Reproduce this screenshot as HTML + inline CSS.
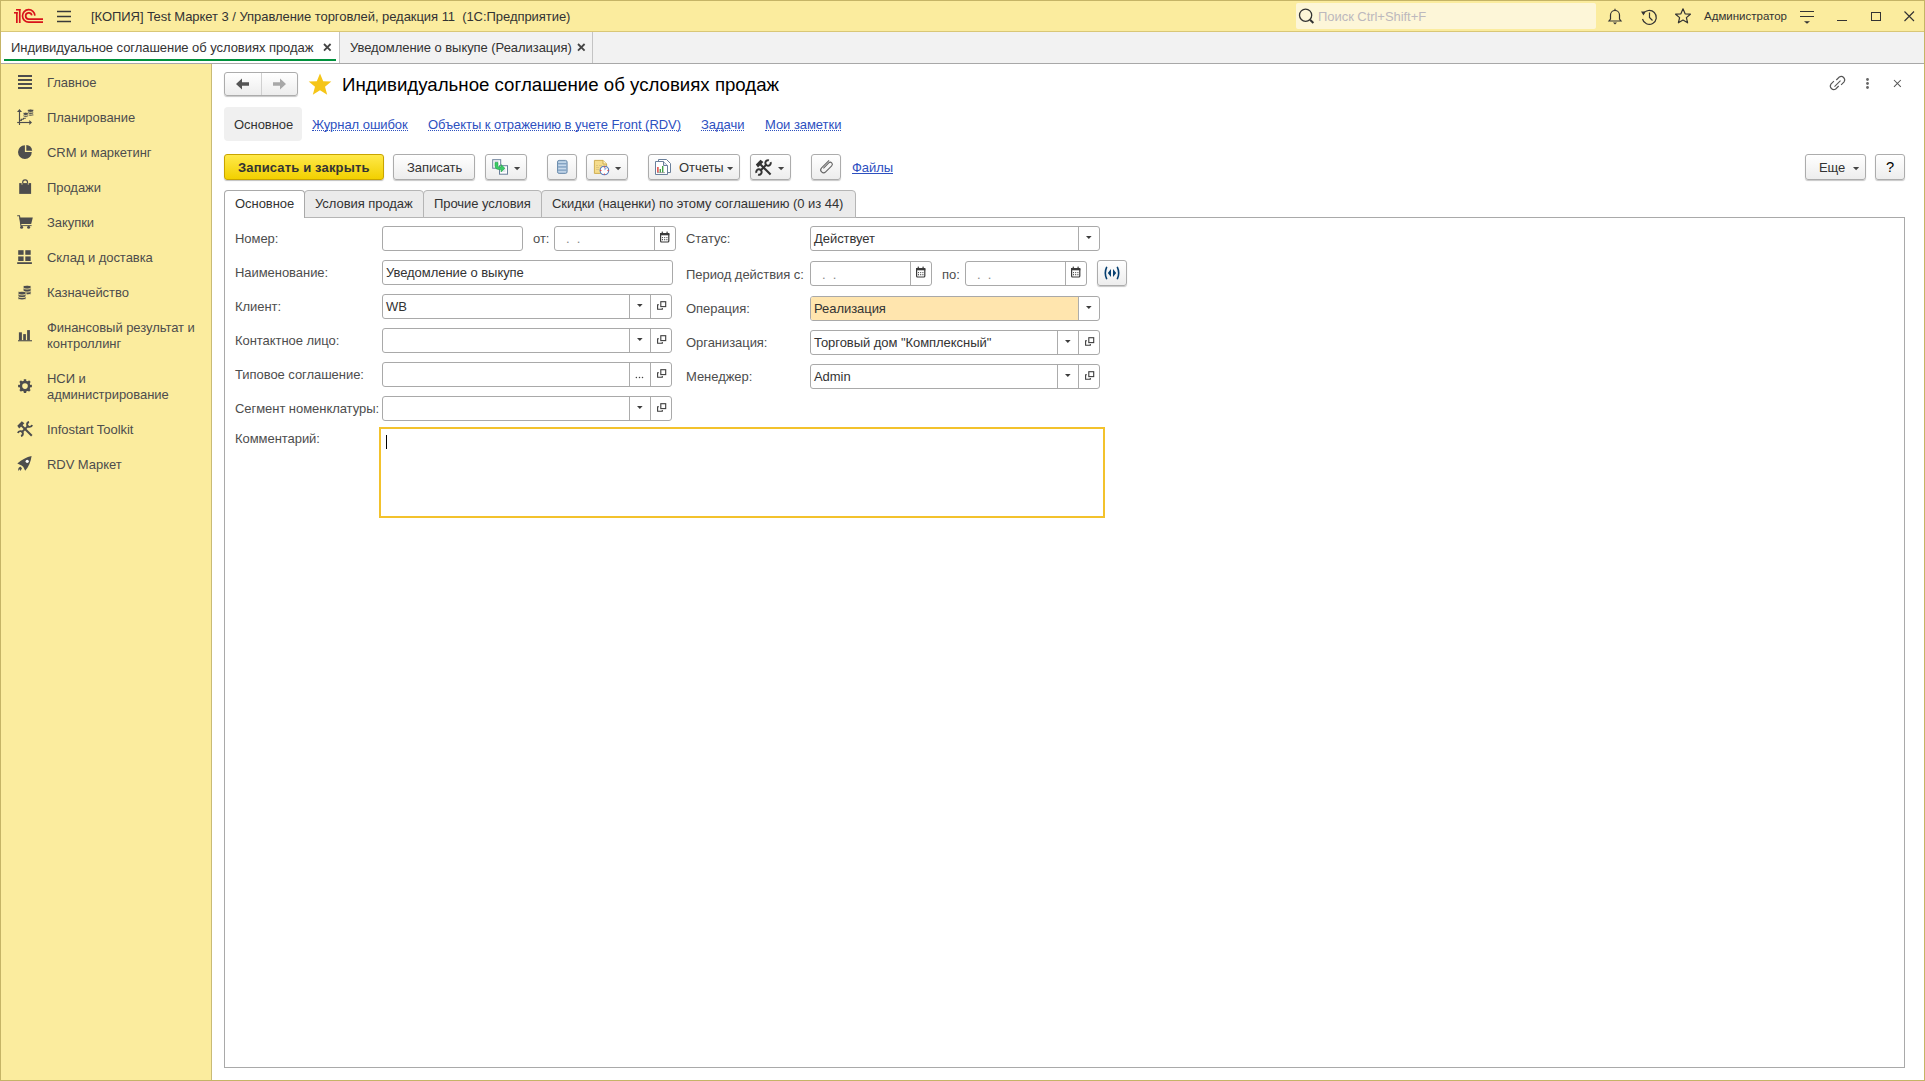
<!DOCTYPE html>
<html><head><meta charset="utf-8">
<style>
*{margin:0;padding:0;box-sizing:border-box}
html,body{width:1925px;height:1081px;overflow:hidden;background:#fff;font-family:"Liberation Sans", sans-serif;font-size:13.33px;color:#333}
.a{position:absolute}
svg.a{overflow:visible}
.t{position:absolute;white-space:nowrap;line-height:normal}
.btn{position:absolute;border:1px solid #acacac;border-radius:3px;background:linear-gradient(#ffffff,#ededed);box-shadow:0 1px 1px rgba(0,0,0,.22)}
.inp{position:absolute;border:1px solid #a9a9a9;border-radius:3px;background:#fff}
</style></head><body>
<div class="a" style="left:212px;top:64px;width:1712px;height:1016px;background:#fff"></div>
<div class="a" style="left:0px;top:0px;width:1925px;height:32px;background:#fbec9e;"></div>
<div class="a" style="left:0px;top:31px;width:1925px;height:1px;background:#d9c777;"></div>
<div class="a" style="left:0px;top:32px;width:1925px;height:32px;background:#f2f2f2;"></div>
<div class="a" style="left:0px;top:63px;width:1925px;height:1px;background:#a8a8a8;"></div>
<div class="a" style="left:1px;top:32px;width:338px;height:31px;background:#fff;"></div>
<div class="a" style="left:339px;top:32px;width:1px;height:31px;background:#c4c4c4;"></div>
<div class="a" style="left:592px;top:32px;width:1px;height:31px;background:#c4c4c4;"></div>
<div class="a" style="left:4px;top:59px;width:332px;height:2px;background:#00913c;"></div>
<div class="a" style="left:0px;top:64px;width:212px;height:1017px;background:#fbec9e;"></div>
<div class="a" style="left:211px;top:64px;width:1px;height:1017px;background:#c9bb76;"></div>
<div class="a" style="left:0px;top:0px;width:1925px;height:1px;background:#c5b466;"></div>
<div class="a" style="left:0px;top:0px;width:1px;height:1081px;background:#c5b466;"></div>
<div class="a" style="left:1924px;top:0px;width:1px;height:1081px;background:#c5b466;"></div>
<div class="a" style="left:0px;top:1080px;width:1925px;height:1px;background:#c5b466;"></div>
<svg class="a" style="left:10px;top:5px" width="40" height="23" viewBox="0 0 40 23"><g fill="#d8131b"><rect x="4" y="7" width="3.7" height="1.6"/><rect x="6" y="7" width="1.7" height="11"/>
<rect x="6" y="4" width="4.6" height="1.6"/><rect x="8.9" y="4" width="1.7" height="14"/></g>
<g fill="none" stroke="#d8131b" stroke-width="1.7"><path d="M24.9 10.6 A6.2 6.2 0 1 0 18.7 17.1 H33"/><path d="M21.8 10.4 A3.1 3.1 0 1 0 18.7 14.1 H33"/></g></svg>
<svg class="a" style="left:56px;top:9px" width="16" height="14" viewBox="0 0 16 14"><g stroke="#3a3a3a" stroke-width="1.3"><path d="M1 2.5H15M1 7.5H15M1 12.5H15"/></g></svg>
<div class="t " style="left:91px;top:9px;font-size:13px;color:#333;font-weight:normal;letter-spacing:-0.05px;">[КОПИЯ] Test Маркет 3 / Управление торговлей, редакция 11&nbsp; (1С:Предприятие)</div>
<div class="a" style="left:1296px;top:3px;width:300px;height:26px;background:#fdf6d8;border-radius:2px;"></div>
<svg class="a" style="left:1296px;top:6px" width="20" height="20" viewBox="0 0 20 20"><g fill="none" stroke="#333"><circle cx="9.6" cy="9.2" r="6.1" stroke-width="1.3"/><path d="M14 13.7L17.4 17" stroke-width="2"/></g></svg>
<div class="t " style="left:1318px;top:9px;font-size:13px;color:#bcb8bd;font-weight:normal;letter-spacing:-0.05px;">Поиск Ctrl+Shift+F</div>
<svg class="a" style="left:1606px;top:7px" width="18" height="18" viewBox="0 0 18 18"><g fill="none" stroke="#333" stroke-width="1.2"><path d="M3 14 H15 L13.5 12 V8 A4.5 4.5 0 0 0 4.5 8 V12 Z"/><path d="M9 1.8 V3.5"/></g><path d="M7 15.5 H11 L9 17.5Z" fill="#333"/></svg>
<svg class="a" style="left:1640px;top:8px" width="18" height="18" viewBox="0 0 18 18"><g fill="none" stroke="#333" stroke-width="1.2"><path d="M3.2 6 A7 7 0 1 1 2.5 11"/><path d="M9.5 4.5 V9.5 L12.5 12.5"/></g><path d="M1 3.5 L5.5 3.5 L3.5 7.5Z" fill="#333"/></svg>
<svg class="a" style="left:1674px;top:7px" width="18" height="18" viewBox="0 0 18 18"><path d="M9 1.8 L11.1 6.8 L16.4 7.2 L12.4 10.6 L13.6 15.8 L9 13 L4.4 15.8 L5.6 10.6 L1.6 7.2 L6.9 6.8Z" fill="none" stroke="#333" stroke-width="1.2" stroke-linejoin="round"/></svg>
<div class="t " style="left:1704px;top:10px;font-size:11.5px;color:#333;font-weight:normal;letter-spacing:0;">Администратор</div>
<svg class="a" style="left:1799px;top:9px" width="17" height="16" viewBox="0 0 17 16"><g stroke="#333" stroke-width="1.2"><path d="M1 2.5H15M1 7.5H15"/></g><path d="M5 12.2H11L8 14.8Z" fill="#333"/></svg>
<div class="a" style="left:1837px;top:20px;width:10px;height:1.3px;background:#333;"></div>
<div class="a" style="left:1871px;top:12px;width:10px;height:9px;border:1.2px solid #333;"></div>
<svg class="a" style="left:1904px;top:11px" width="11" height="11" viewBox="0 0 11 11"><g stroke="#333" stroke-width="1.15"><path d="M0.5 0.5L10 10M10 0.5L0.5 10"/></g></svg>
<div class="t " style="left:11px;top:40px;font-size:13px;color:#333;font-weight:normal;letter-spacing:-0.05px;">Индивидуальное соглашение об условиях продаж</div>
<svg class="a" style="left:323px;top:43px" width="9" height="9" viewBox="0 0 9 9"><g stroke="#444" stroke-width="1.8"><path d="M1 1L7.6 7.6M7.6 1L1 7.6"/></g></svg>
<div class="t " style="left:350px;top:40px;font-size:13px;color:#333;font-weight:normal;letter-spacing:-0.05px;">Уведомление о выкупе (Реализация)</div>
<svg class="a" style="left:577px;top:43px" width="9" height="9" viewBox="0 0 9 9"><g stroke="#444" stroke-width="1.8"><path d="M1 1L7.6 7.6M7.6 1L1 7.6"/></g></svg>
<div class="t " style="left:47px;top:75px;font-size:13px;color:#4d4d4d;font-weight:normal;letter-spacing:-0.05px;">Главное</div>
<div class="t " style="left:47px;top:110px;font-size:13px;color:#4d4d4d;font-weight:normal;letter-spacing:-0.05px;">Планирование</div>
<div class="t " style="left:47px;top:145px;font-size:13px;color:#4d4d4d;font-weight:normal;letter-spacing:-0.05px;">CRM и маркетинг</div>
<div class="t " style="left:47px;top:180px;font-size:13px;color:#4d4d4d;font-weight:normal;letter-spacing:-0.05px;">Продажи</div>
<div class="t " style="left:47px;top:215px;font-size:13px;color:#4d4d4d;font-weight:normal;letter-spacing:-0.05px;">Закупки</div>
<div class="t " style="left:47px;top:250px;font-size:13px;color:#4d4d4d;font-weight:normal;letter-spacing:-0.05px;">Склад и доставка</div>
<div class="t " style="left:47px;top:285px;font-size:13px;color:#4d4d4d;font-weight:normal;letter-spacing:-0.05px;">Казначейство</div>
<div class="t " style="left:47px;top:320px;font-size:13px;color:#4d4d4d;font-weight:normal;letter-spacing:-0.05px;">Финансовый результат и</div>
<div class="t " style="left:47px;top:336px;font-size:13px;color:#4d4d4d;font-weight:normal;letter-spacing:-0.05px;">контроллинг</div>
<div class="t " style="left:47px;top:371px;font-size:13px;color:#4d4d4d;font-weight:normal;letter-spacing:-0.05px;">НСИ и</div>
<div class="t " style="left:47px;top:387px;font-size:13px;color:#4d4d4d;font-weight:normal;letter-spacing:-0.05px;">администрирование</div>
<div class="t " style="left:47px;top:422px;font-size:13px;color:#4d4d4d;font-weight:normal;letter-spacing:-0.05px;">Infostart Toolkit</div>
<div class="t " style="left:47px;top:457px;font-size:13px;color:#4d4d4d;font-weight:normal;letter-spacing:-0.05px;">RDV Маркет</div>
<svg class="a" style="left:16px;top:73px" width="18" height="18" viewBox="0 0 18 18"><g fill="#4d4d4d"><rect x="2" y="2" width="14" height="2"/><rect x="2" y="6" width="14" height="2"/><rect x="2" y="10" width="14" height="2"/><rect x="2" y="14" width="14" height="2"/></g></svg>
<svg class="a" style="left:16px;top:108px" width="18" height="18" viewBox="0 0 18 18"><g fill="none" stroke="#4d4d4d" stroke-width="1.15"><path d="M3.5 3V17"/><path d="M1.2 14.5H14"/><path d="M4.1 12.3H5.3V11.2H7.2L7.6 10.2H9.8"/></g><g fill="#4d4d4d"><path d="M1 3.9L3.5 1L6 3.9Z"/><path d="M13.3 12L16 14.5L13.3 17Z"/></g><path d="M11.6 2.3A3.0 1.2 0 0 1 17.6 2.3V6.90A3.0 1.2 0 0 1 11.6 6.90Z" fill="#4d4d4d" stroke="#fbec9e" stroke-width="0.8"/><path d="M11.6 3.20A3.0 1.2 0 0 0 17.6 3.20" fill="none" stroke="#fbec9e" stroke-width="0.85"/><path d="M11.6 5.20A3.0 1.2 0 0 0 17.6 5.20" fill="none" stroke="#fbec9e" stroke-width="0.85"/><path d="M7.1 5.4A2.6 1.2 0 0 1 12.299999999999999 5.4V8.10A2.6 1.2 0 0 1 7.1 8.10Z" fill="#4d4d4d" stroke="#fbec9e" stroke-width="0.8"/><path d="M7.1 6.30A2.6 1.2 0 0 0 12.299999999999999 6.30" fill="none" stroke="#fbec9e" stroke-width="0.85"/></svg>
<svg class="a" style="left:16px;top:143px" width="18" height="18" viewBox="0 0 18 18"><g fill="#4d4d4d"><path d="M8.9 9.1V2.2A6.9 6.9 0 1 0 15.8 9.1Z"/><path d="M10.3 7.7V1.9A5.8 5.8 0 0 1 16.1 7.7Z"/></g></svg>
<svg class="a" style="left:16px;top:178px" width="18" height="18" viewBox="0 0 18 18"><path d="M6.7 6.5V4.2A2.4 2.4 0 0 1 11.5 4.2V6.5" fill="none" stroke="#4d4d4d" stroke-width="1.2"/><rect x="3.2" y="5.1" width="11.9" height="10.8" fill="#4d4d4d"/><g fill="#fbec9e"><rect x="5.6" y="5.1" width="0.8" height="1.6"/><rect x="11.8" y="5.1" width="0.8" height="1.6"/></g></svg>
<svg class="a" style="left:16px;top:213px" width="18" height="18" viewBox="0 0 18 18"><g fill="#4d4d4d"><path d="M3.4 4.4H16.8L15.2 11H4.6Z"/><rect x="4.4" y="12.2" width="11.2" height="0.9"/><circle cx="5.6" cy="14.3" r="1.5"/><circle cx="12.6" cy="14.3" r="1.5"/></g><path d="M1.2 2.7H3.5L4.9 12.5" fill="none" stroke="#4d4d4d" stroke-width="1.1"/></svg>
<svg class="a" style="left:16px;top:248px" width="18" height="18" viewBox="0 0 18 18"><g fill="#4d4d4d"><rect x="2.2" y="2.2" width="5.4" height="4.6"/><rect x="9.3" y="2.2" width="5.4" height="4.6"/><rect x="2.2" y="8.4" width="5.4" height="4.6"/><rect x="9.3" y="8.4" width="5.4" height="4.6"/><rect x="1.2" y="14.2" width="14.7" height="1.8"/></g></svg>
<svg class="a" style="left:16px;top:283px" width="18" height="18" viewBox="0 0 18 18"><path d="M7.1499999999999995 3.7A3.95 1.5 0 0 1 15.05 3.7V10.30A3.95 1.5 0 0 1 7.1499999999999995 10.30Z" fill="#4d4d4d" stroke="#fbec9e" stroke-width="0.8"/><path d="M7.1499999999999995 4.60A3.95 1.5 0 0 0 15.05 4.60" fill="none" stroke="#fbec9e" stroke-width="0.85"/><path d="M7.1499999999999995 7.60A3.95 1.5 0 0 0 15.05 7.60" fill="none" stroke="#fbec9e" stroke-width="0.85"/><path d="M2.05 9.700000000000001A3.95 1.4 0 0 1 9.95 9.700000000000001V15.50A3.95 1.4 0 0 1 2.05 15.50Z" fill="#4d4d4d" stroke="#fbec9e" stroke-width="0.8"/><path d="M2.05 10.60A3.95 1.4 0 0 0 9.95 10.60" fill="none" stroke="#fbec9e" stroke-width="0.85"/><path d="M2.05 13.20A3.95 1.4 0 0 0 9.95 13.20" fill="none" stroke="#fbec9e" stroke-width="0.85"/></svg>
<svg class="a" style="left:16px;top:326px" width="18" height="18" viewBox="0 0 18 18"><g fill="#4d4d4d"><rect x="2.9" y="6.3" width="3" height="8"/><rect x="7.2" y="8.1" width="2.7" height="6.2"/><rect x="11.1" y="4.1" width="2.8" height="10.2"/><rect x="2" y="14.2" width="14" height="1.1"/></g></svg>
<svg class="a" style="left:16px;top:377px" width="18" height="18" viewBox="0 0 18 18"><polygon points="14.27,7.92 15.89,7.87 15.89,10.33 14.27,10.28 13.56,11.99 14.74,13.10 13.00,14.84 11.89,13.66 10.18,14.37 10.23,15.99 7.77,15.99 7.82,14.37 6.11,13.66 5.00,14.84 3.26,13.10 4.44,11.99 3.73,10.28 2.11,10.33 2.11,7.87 3.73,7.92 4.44,6.21 3.26,5.10 5.00,3.36 6.11,4.54 7.82,3.83 7.77,2.21 10.23,2.21 10.18,3.83 11.89,4.54 13.00,3.36 14.74,5.10 13.56,6.21" fill="#4d4d4d"/><circle cx="9" cy="9.1" r="5.4" fill="#4d4d4d"/><circle cx="9" cy="9.1" r="2.8" fill="#fbec9e"/></svg>
<svg class="a" style="left:16px;top:420px" width="18" height="18" viewBox="0 0 18 18"><g stroke="#4d4d4d" stroke-width="2" fill="none"><path d="M5.5 5.5L15.8 15.8"/><path d="M5.6 12.4L12.4 5.6"/></g><path d="M1.3 5.8L5.8 1.3L8.4 3.2L3.2 8.4Z" fill="#4d4d4d"/><path d="M16.04 4.96A2.5 2.5 0 1 1 13.04 1.96" fill="none" stroke="#4d4d4d" stroke-width="1.9"/><path d="M1.96 13.04A2.5 2.5 0 1 1 4.96 16.04" fill="none" stroke="#4d4d4d" stroke-width="1.9"/></svg>
<svg class="a" style="left:16px;top:455px" width="18" height="18" viewBox="0 0 18 18"><g fill="#4d4d4d"><path d="M15.6 1C10.5 2.2 6 4.5 1.3 8.5L5.6 10.6L7.2 11.8L9.2 15.8C12.5 12 14.8 7 15.6 1Z"/><path d="M2 15.9L2.5 12.9L4.3 11.6L6 13.3L5.4 14.6L4.2 15.9L3.7 14.3Z"/></g><circle cx="11.2" cy="6.3" r="1.6" fill="#fff"/></svg>
<div class="btn" style="left:224px;top:72px;width:74px;height:24px;"></div>
<div class="a" style="left:261px;top:73px;width:1px;height:22px;background:#d0d0d0;"></div>
<svg class="a" style="left:234px;top:76px" width="18" height="16" viewBox="0 0 18 16"><path d="M2 8L8 2.5V6.2H15V9.8H8V13.5Z" fill="#555"/></svg>
<svg class="a" style="left:270px;top:76px" width="18" height="16" viewBox="0 0 18 16"><path d="M16 8L10 2.5V6.2H3V9.8H10V13.5Z" fill="#a8a8a8"/></svg>
<svg class="a" style="left:307px;top:72px" width="26" height="24" viewBox="0 0 26 24"><path d="M13 1.5L16.2 9.2L24.3 9.6L18 14.8L20.2 22.8L13 18.2L5.8 22.8L8 14.8L1.7 9.6L9.8 9.2Z" fill="#f5c518"/></svg>
<div class="t " style="left:342px;top:74px;font-size:18.67px;color:#000;font-weight:normal;letter-spacing:0;">Индивидуальное соглашение об условиях продаж</div>
<svg class="a" style="left:1828px;top:74px" width="19" height="18" viewBox="0 0 19 18"><g fill="none" stroke="#555" stroke-width="0.95" transform="translate(9.5 9) scale(1.2) translate(-9.5 -9)"><path d="M8.5 6.5L11 4A2.9 2.9 0 0 1 15 8L12.5 10.5"/><path d="M10.5 11.5L8 14A2.9 2.9 0 0 1 4 10L6.5 7.5"/><path d="M7 12L12 7"/></g></svg>
<svg class="a" style="left:1864px;top:76px" width="7" height="14" viewBox="0 0 7 14"><g fill="#666"><circle cx="3.5" cy="3.5" r="1.4"/><circle cx="3.5" cy="7.5" r="1.4"/><circle cx="3.5" cy="11.5" r="1.4"/></g></svg>
<svg class="a" style="left:1893px;top:79px" width="10" height="10" viewBox="0 0 10 10"><g stroke="#555" stroke-width="1.05"><path d="M1 1L7.8 7.8M7.8 1L1 7.8"/></g></svg>
<div class="a" style="left:224px;top:107px;width:78px;height:34px;background:#f0f0f0;border-radius:4px;"></div>
<div class="t " style="left:234px;top:117px;font-size:13px;color:#333;font-weight:normal;letter-spacing:-0.05px;">Основное</div>
<div class="t " style="left:312px;top:117px;font-size:13px;color:#2d50bf;font-weight:normal;letter-spacing:-0.05px;border-bottom:1px dotted #2d50bf;line-height:15px;height:14px;">Журнал ошибок</div>
<div class="t " style="left:428px;top:117px;font-size:13px;color:#2d50bf;font-weight:normal;letter-spacing:-0.05px;border-bottom:1px dotted #2d50bf;line-height:15px;height:14px;">Объекты к отражению в учете Front (RDV)</div>
<div class="t " style="left:701px;top:117px;font-size:13px;color:#2d50bf;font-weight:normal;letter-spacing:-0.05px;border-bottom:1px dotted #2d50bf;line-height:15px;height:14px;">Задачи</div>
<div class="t " style="left:765px;top:117px;font-size:13px;color:#2d50bf;font-weight:normal;letter-spacing:-0.05px;border-bottom:1px dotted #2d50bf;line-height:15px;height:14px;">Мои заметки</div>
<div class="a" style="left:224px;top:154px;width:160px;height:26px;border:1px solid #c8a400;border-radius:3px;background:linear-gradient(#ffe94a,#f2d000);box-shadow:0 1px 1px rgba(0,0,0,.25)"></div>
<div class="t " style="left:238px;top:160px;font-size:13px;color:#333;font-weight:bold;letter-spacing:-0.05px;letter-spacing:0.15px;">Записать и закрыть</div>
<div class="btn" style="left:393px;top:154px;width:82px;height:26px;"></div>
<div class="t " style="left:407px;top:160px;font-size:13px;color:#333;font-weight:normal;letter-spacing:-0.05px;">Записать</div>
<div class="btn" style="left:485px;top:154px;width:42px;height:26px;"></div>
<svg class="a" style="left:491px;top:158px" width="18" height="18" viewBox="0 0 18 18"><g fill="#fff" stroke="#6a7f9a" stroke-width="1"><rect x="1.7" y="1.7" width="8" height="8.5"/><rect x="8.5" y="7.7" width="8" height="8.5"/></g><g stroke="#b8c4d4" stroke-width="0.8"><path d="M3.5 3.6H7.5M11 11H14.5M11 13H14.5"/></g><path d="M4 4.5H7V7.8Q7 9 8.3 9H10V6.6L13.9 10.3L10 14V11.6H8Q4 11.6 4 7.8Z" fill="#3ccb66" stroke="#22a14a" stroke-width="0.6"/></svg>
<svg class="a" style="left:514px;top:167px" width="7" height="4" viewBox="0 0 7 4"><path d="M0 0H6.2L3.1 3.3Z" fill="#444"/></svg>
<div class="btn" style="left:547px;top:154px;width:30px;height:26px;"></div>
<svg class="a" style="left:556px;top:159px" width="12" height="16" viewBox="0 0 12 16"><rect x="1.5" y="1.4" width="9.6" height="13" rx="1.6" fill="#a9c3dc" stroke="#6e8eae"/><g stroke="#7b9bbb" stroke-width="0.9"><path d="M2 4.6H10.6M2 7.9H10.6M2 11.2H10.6"/></g><g stroke="#dbe8f3" stroke-width="0.7"><path d="M2.5 3.2H10M2.5 6.4H10M2.5 9.6H10M2.5 12.8H10"/></g></svg>
<div class="btn" style="left:586px;top:154px;width:42px;height:26px;"></div>
<svg class="a" style="left:593px;top:159px" width="18" height="18" viewBox="0 0 18 18"><path d="M1.4 1.4H10L13.6 5V14.4H1.4Z" fill="#f5dc8c" stroke="#cfae52"/><path d="M10 1.4V5H13.6" fill="#fff3c8" stroke="#cfae52"/><g stroke="#d9c07a" stroke-width="0.8"><path d="M3 6.5H5M6 6.5H9M3 8.5H6M3 10.5H6"/></g><circle cx="11.4" cy="11.5" r="4.3" fill="#fff" stroke="#4f7bc0" stroke-width="1.1"/><path d="M11.4 11.5V8.3A3.2 3.2 0 0 1 13.8 9.4Z" fill="#9db5e0"/><g fill="#e53935"><circle cx="11.4" cy="7.9" r="0.7"/><circle cx="15" cy="11.5" r="0.7"/><circle cx="11.4" cy="15.1" r="0.7"/><circle cx="7.8" cy="11.5" r="0.7"/></g></svg>
<svg class="a" style="left:615px;top:167px" width="7" height="4" viewBox="0 0 7 4"><path d="M0 0H6.2L3.1 3.3Z" fill="#444"/></svg>
<div class="btn" style="left:648px;top:154px;width:92px;height:26px;"></div>
<svg class="a" style="left:654px;top:158px" width="18" height="18" viewBox="0 0 18 18"><path d="M4.5 1.5H12.5L16.5 5.5V14.5H4.5Z" fill="#fff" stroke="#6a7f9a"/><path d="M1.5 3.5H9.5L13.5 7.5V16.5H1.5Z" fill="#fff" stroke="#6a7f9a"/><path d="M9.5 3.5V7.5H13.5" fill="#dfe6ef" stroke="#6a7f9a"/><rect x="3.2" y="9" width="1.4" height="5.5" fill="#e53935"/><rect x="5.6" y="11" width="1.4" height="3.5" fill="#43a047"/><rect x="8" y="8" width="1.4" height="6.5" fill="#43a047"/><path d="M3 14.6H11" stroke="#777" stroke-width="0.6"/></svg>
<div class="t " style="left:679px;top:160px;font-size:13px;color:#333;font-weight:normal;letter-spacing:-0.05px;">Отчеты</div>
<svg class="a" style="left:727px;top:167px" width="7" height="4" viewBox="0 0 7 4"><path d="M0 0H6.2L3.1 3.3Z" fill="#444"/></svg>
<div class="btn" style="left:750px;top:154px;width:41px;height:26px;"></div>
<svg class="a" style="left:755px;top:159px" width="17" height="17" viewBox="0 0 17 17"><g stroke="#333" stroke-width="2.1" fill="none"><path d="M5.3 5.3L15.6 15.6"/><path d="M5.3 11.7L11.7 5.3"/></g><path d="M0.8 5.5L5.5 0.8L8.4 3L3 8.4Z" fill="#333"/><path d="M13.9 1.4A2.7 2.7 0 1 0 15.6 3.1" fill="none" stroke="#333" stroke-width="2"/><path d="M3.1 15.6A2.7 2.7 0 1 0 1.4 13.9" fill="none" stroke="#333" stroke-width="2"/></svg>
<svg class="a" style="left:778px;top:167px" width="7" height="4" viewBox="0 0 7 4"><path d="M0 0H6.2L3.1 3.3Z" fill="#444"/></svg>
<div class="btn" style="left:811px;top:154px;width:30px;height:26px;"></div>
<svg class="a" style="left:818px;top:159px" width="16" height="16" viewBox="0 0 16 16"><path d="M-2.4 -6.2V3A2.5 2.5 0 0 0 2.6 3V-4.4A1.8 1.8 0 0 0 -1 -4.4V2.2" transform="translate(8 8.3) rotate(45) scale(1.15)" fill="none" stroke="#666" stroke-width="0.95"/></svg>
<div class="t " style="left:852px;top:160px;font-size:13px;color:#2d50bf;font-weight:normal;letter-spacing:-0.05px;border-bottom:1px solid #2d50bf;line-height:15px;height:14px;">Файлы</div>
<div class="btn" style="left:1805px;top:154px;width:61px;height:26px;"></div>
<div class="t " style="left:1819px;top:160px;font-size:13px;color:#333;font-weight:normal;letter-spacing:-0.05px;">Еще</div>
<svg class="a" style="left:1853px;top:167px" width="7" height="4" viewBox="0 0 7 4"><path d="M0 0H6.2L3.1 3.3Z" fill="#444"/></svg>
<div class="btn" style="left:1875px;top:154px;width:30px;height:26px;"></div>
<div class="t " style="left:1886px;top:159px;font-size:14.67px;color:#000;font-weight:normal;letter-spacing:0;">?</div>
<div class="a" style="left:224px;top:217px;width:1681px;height:851px;border:1px solid #a9a9a9;background:#fff;"></div>
<div class="a" style="left:304px;top:190px;width:120px;height:28px;border:1px solid #b5b5b5;border-radius:4px 4px 0 0;background:#ebebeb;"></div>
<div class="t " style="left:315px;top:196px;font-size:13px;color:#333;font-weight:normal;letter-spacing:-0.05px;">Условия продаж</div>
<div class="a" style="left:423px;top:190px;width:119px;height:28px;border:1px solid #b5b5b5;border-radius:4px 4px 0 0;background:#ebebeb;"></div>
<div class="t " style="left:434px;top:196px;font-size:13px;color:#333;font-weight:normal;letter-spacing:-0.05px;">Прочие условия</div>
<div class="a" style="left:541px;top:190px;width:315px;height:28px;border:1px solid #b5b5b5;border-radius:4px 4px 0 0;background:#ebebeb;"></div>
<div class="t " style="left:552px;top:196px;font-size:13px;color:#333;font-weight:normal;letter-spacing:-0.05px;">Скидки (наценки) по этому соглашению (0 из 44)</div>
<div class="a" style="left:224px;top:190px;width:81px;height:28px;border:1px solid #a9a9a9;border-bottom:none;border-radius:4px 4px 0 0;background:#fff;"></div>
<div class="t " style="left:235px;top:196px;font-size:13px;color:#333;font-weight:normal;letter-spacing:-0.05px;">Основное</div>
<div class="t " style="left:235px;top:231px;font-size:13px;color:#4d4d4d;font-weight:normal;letter-spacing:-0.05px;">Номер:</div>
<div class="t " style="left:235px;top:265px;font-size:13px;color:#4d4d4d;font-weight:normal;letter-spacing:-0.05px;">Наименование:</div>
<div class="t " style="left:235px;top:299px;font-size:13px;color:#4d4d4d;font-weight:normal;letter-spacing:-0.05px;">Клиент:</div>
<div class="t " style="left:235px;top:333px;font-size:13px;color:#4d4d4d;font-weight:normal;letter-spacing:-0.05px;">Контактное лицо:</div>
<div class="t " style="left:235px;top:367px;font-size:13px;color:#4d4d4d;font-weight:normal;letter-spacing:-0.05px;">Типовое соглашение:</div>
<div class="t " style="left:235px;top:401px;font-size:13px;color:#4d4d4d;font-weight:normal;letter-spacing:-0.05px;">Сегмент номенклатуры:</div>
<div class="t " style="left:235px;top:431px;font-size:13px;color:#4d4d4d;font-weight:normal;letter-spacing:-0.05px;">Комментарий:</div>
<div class="inp" style="left:382px;top:226px;width:141px;height:25px;background:#fff;"></div>
<div class="t " style="left:533px;top:231px;font-size:13px;color:#4d4d4d;font-weight:normal;letter-spacing:-0.05px;">от:</div>
<div class="inp" style="left:554px;top:226px;width:122px;height:25px;background:#fff;"></div>
<div class="a" style="left:654px;top:227px;width:1px;height:23px;background:#acacac;"></div>
<svg class="a" style="left:658px;top:231px" width="12" height="12" viewBox="0 0 12 12"><rect x="2.6" y="2.6" width="8.2" height="8.4" rx="1" fill="#fff" stroke="#3a3a3a" stroke-width="1.2"/><rect x="2" y="2" width="9.4" height="2.3" fill="#3a3a3a"/><g fill="#3a3a3a"><circle cx="4.3" cy="1.3" r="0.8"/><circle cx="9.1" cy="1.3" r="0.8"/><circle cx="4.5" cy="6.6" r="0.6"/><circle cx="6.7" cy="6.6" r="0.6"/><circle cx="8.9" cy="6.6" r="0.6"/><circle cx="4.5" cy="8.7" r="0.6"/><circle cx="6.7" cy="8.7" r="0.6"/><circle cx="8.9" cy="8.7" r="0.6"/></g></svg>
<div class="t " style="left:566px;top:231px;font-size:13px;color:#888;font-weight:normal;letter-spacing:-0.05px;">.&nbsp;&nbsp;.</div>
<div class="inp" style="left:382px;top:260px;width:291px;height:25px;background:#fff;"></div>
<div class="t " style="left:386px;top:265px;font-size:13px;color:#333;font-weight:normal;letter-spacing:-0.05px;">Уведомление о выкупе</div>
<div class="inp" style="left:382px;top:294px;width:290px;height:25px;background:#fff;"></div>
<div class="a" style="left:650px;top:295px;width:1px;height:23px;background:#acacac;"></div>
<div class="a" style="left:629px;top:295px;width:1px;height:23px;background:#acacac;"></div>
<svg class="a" style="left:637px;top:304px" width="7" height="4" viewBox="0 0 7 4"><path d="M0 0H5.6L2.8 3.1Z" fill="#3d3d3d"/></svg>
<svg class="a" style="left:656px;top:301px" width="11" height="11" viewBox="0 0 11 11"><g fill="none" stroke="#3d3d3d" stroke-width="1.1"><rect x="4.8" y="0.7" width="4.9" height="4.9"/><path d="M2.9 3.7H1.6V8.3H6.3V7.1"/></g></svg>
<div class="t " style="left:386px;top:299px;font-size:13px;color:#333;font-weight:normal;letter-spacing:-0.05px;">WB</div>
<div class="inp" style="left:382px;top:328px;width:290px;height:25px;background:#fff;"></div>
<div class="a" style="left:650px;top:329px;width:1px;height:23px;background:#acacac;"></div>
<div class="a" style="left:629px;top:329px;width:1px;height:23px;background:#acacac;"></div>
<svg class="a" style="left:637px;top:338px" width="7" height="4" viewBox="0 0 7 4"><path d="M0 0H5.6L2.8 3.1Z" fill="#3d3d3d"/></svg>
<svg class="a" style="left:656px;top:335px" width="11" height="11" viewBox="0 0 11 11"><g fill="none" stroke="#3d3d3d" stroke-width="1.1"><rect x="4.8" y="0.7" width="4.9" height="4.9"/><path d="M2.9 3.7H1.6V8.3H6.3V7.1"/></g></svg>
<div class="inp" style="left:382px;top:362px;width:290px;height:25px;background:#fff;"></div>
<div class="a" style="left:650px;top:363px;width:1px;height:23px;background:#acacac;"></div>
<div class="a" style="left:629px;top:363px;width:1px;height:23px;background:#acacac;"></div>
<svg class="a" style="left:634px;top:376px" width="10" height="4" viewBox="0 0 10 4"><g fill="#444"><circle cx="2.4" cy="1.5" r="0.75"/><circle cx="5.5" cy="1.5" r="0.75"/><circle cx="8.5" cy="1.5" r="0.75"/></g></svg>
<svg class="a" style="left:656px;top:369px" width="11" height="11" viewBox="0 0 11 11"><g fill="none" stroke="#3d3d3d" stroke-width="1.1"><rect x="4.8" y="0.7" width="4.9" height="4.9"/><path d="M2.9 3.7H1.6V8.3H6.3V7.1"/></g></svg>
<div class="inp" style="left:382px;top:396px;width:290px;height:25px;background:#fff;"></div>
<div class="a" style="left:650px;top:397px;width:1px;height:23px;background:#acacac;"></div>
<div class="a" style="left:629px;top:397px;width:1px;height:23px;background:#acacac;"></div>
<svg class="a" style="left:637px;top:406px" width="7" height="4" viewBox="0 0 7 4"><path d="M0 0H5.6L2.8 3.1Z" fill="#3d3d3d"/></svg>
<svg class="a" style="left:656px;top:403px" width="11" height="11" viewBox="0 0 11 11"><g fill="none" stroke="#3d3d3d" stroke-width="1.1"><rect x="4.8" y="0.7" width="4.9" height="4.9"/><path d="M2.9 3.7H1.6V8.3H6.3V7.1"/></g></svg>
<div class="t " style="left:686px;top:231px;font-size:13px;color:#4d4d4d;font-weight:normal;letter-spacing:-0.05px;">Статус:</div>
<div class="t " style="left:686px;top:266.5px;font-size:13px;color:#4d4d4d;font-weight:normal;letter-spacing:-0.05px;">Период действия с:</div>
<div class="t " style="left:686px;top:301px;font-size:13px;color:#4d4d4d;font-weight:normal;letter-spacing:-0.05px;">Операция:</div>
<div class="t " style="left:686px;top:335px;font-size:13px;color:#4d4d4d;font-weight:normal;letter-spacing:-0.05px;">Организация:</div>
<div class="t " style="left:686px;top:369px;font-size:13px;color:#4d4d4d;font-weight:normal;letter-spacing:-0.05px;">Менеджер:</div>
<div class="inp" style="left:810px;top:226px;width:290px;height:25px;background:#fff;"></div>
<div class="a" style="left:1078px;top:227px;width:1px;height:23px;background:#acacac;"></div>
<svg class="a" style="left:1086px;top:236px" width="7" height="4" viewBox="0 0 7 4"><path d="M0 0H5.6L2.8 3.1Z" fill="#3d3d3d"/></svg>
<div class="t " style="left:814px;top:231px;font-size:13px;color:#333;font-weight:normal;letter-spacing:-0.05px;">Действует</div>
<div class="inp" style="left:810px;top:261px;width:122px;height:25px;background:#fff;"></div>
<div class="a" style="left:910px;top:262px;width:1px;height:23px;background:#acacac;"></div>
<svg class="a" style="left:914px;top:266px" width="12" height="12" viewBox="0 0 12 12"><rect x="2.6" y="2.6" width="8.2" height="8.4" rx="1" fill="#fff" stroke="#3a3a3a" stroke-width="1.2"/><rect x="2" y="2" width="9.4" height="2.3" fill="#3a3a3a"/><g fill="#3a3a3a"><circle cx="4.3" cy="1.3" r="0.8"/><circle cx="9.1" cy="1.3" r="0.8"/><circle cx="4.5" cy="6.6" r="0.6"/><circle cx="6.7" cy="6.6" r="0.6"/><circle cx="8.9" cy="6.6" r="0.6"/><circle cx="4.5" cy="8.7" r="0.6"/><circle cx="6.7" cy="8.7" r="0.6"/><circle cx="8.9" cy="8.7" r="0.6"/></g></svg>
<div class="t " style="left:822px;top:266.5px;font-size:13px;color:#888;font-weight:normal;letter-spacing:-0.05px;">.&nbsp;&nbsp;.</div>
<div class="t " style="left:942px;top:266.5px;font-size:13px;color:#4d4d4d;font-weight:normal;letter-spacing:-0.05px;">по:</div>
<div class="inp" style="left:965px;top:261px;width:122px;height:25px;background:#fff;"></div>
<div class="a" style="left:1065px;top:262px;width:1px;height:23px;background:#acacac;"></div>
<svg class="a" style="left:1069px;top:266px" width="12" height="12" viewBox="0 0 12 12"><rect x="2.6" y="2.6" width="8.2" height="8.4" rx="1" fill="#fff" stroke="#3a3a3a" stroke-width="1.2"/><rect x="2" y="2" width="9.4" height="2.3" fill="#3a3a3a"/><g fill="#3a3a3a"><circle cx="4.3" cy="1.3" r="0.8"/><circle cx="9.1" cy="1.3" r="0.8"/><circle cx="4.5" cy="6.6" r="0.6"/><circle cx="6.7" cy="6.6" r="0.6"/><circle cx="8.9" cy="6.6" r="0.6"/><circle cx="4.5" cy="8.7" r="0.6"/><circle cx="6.7" cy="8.7" r="0.6"/><circle cx="8.9" cy="8.7" r="0.6"/></g></svg>
<div class="t " style="left:977px;top:266.5px;font-size:13px;color:#888;font-weight:normal;letter-spacing:-0.05px;">.&nbsp;&nbsp;.</div>
<div class="btn" style="left:1097px;top:260px;width:30px;height:26px;"></div>
<svg class="a" style="left:1103px;top:266px" width="18" height="14" viewBox="0 0 18 14"><g fill="#063f70"><path d="M8 3.1L4.8 7L8 10.9Z"/><path d="M10 3.1L13.2 7L10 10.9Z"/></g><g fill="none" stroke="#063f70" stroke-width="1.6" stroke-linecap="round"><path d="M3.6 1.4Q1 7 3.6 12.6"/><path d="M14.4 1.4Q17 7 14.4 12.6"/></g></svg>
<div class="inp" style="left:810px;top:296px;width:290px;height:25px;background:#fff;"></div>
<div class="a" style="left:1078px;top:297px;width:1px;height:23px;background:#acacac;"></div>
<svg class="a" style="left:1086px;top:306px" width="7" height="4" viewBox="0 0 7 4"><path d="M0 0H5.6L2.8 3.1Z" fill="#3d3d3d"/></svg>
<div class="a" style="left:811px;top:297px;width:267px;height:23px;background:#ffe5ae;border-radius:2px 0 0 2px;"></div>
<div class="t " style="left:814px;top:301px;font-size:13px;color:#333;font-weight:normal;letter-spacing:-0.05px;">Реализация</div>
<div class="inp" style="left:810px;top:330px;width:290px;height:25px;background:#fff;"></div>
<div class="a" style="left:1078px;top:331px;width:1px;height:23px;background:#acacac;"></div>
<div class="a" style="left:1057px;top:331px;width:1px;height:23px;background:#acacac;"></div>
<svg class="a" style="left:1065px;top:340px" width="7" height="4" viewBox="0 0 7 4"><path d="M0 0H5.6L2.8 3.1Z" fill="#3d3d3d"/></svg>
<svg class="a" style="left:1084px;top:337px" width="11" height="11" viewBox="0 0 11 11"><g fill="none" stroke="#3d3d3d" stroke-width="1.1"><rect x="4.8" y="0.7" width="4.9" height="4.9"/><path d="M2.9 3.7H1.6V8.3H6.3V7.1"/></g></svg>
<div class="t " style="left:814px;top:335px;font-size:13px;color:#333;font-weight:normal;letter-spacing:-0.05px;">Торговый дом "Комплексный"</div>
<div class="inp" style="left:810px;top:364px;width:290px;height:25px;background:#fff;"></div>
<div class="a" style="left:1078px;top:365px;width:1px;height:23px;background:#acacac;"></div>
<div class="a" style="left:1057px;top:365px;width:1px;height:23px;background:#acacac;"></div>
<svg class="a" style="left:1065px;top:374px" width="7" height="4" viewBox="0 0 7 4"><path d="M0 0H5.6L2.8 3.1Z" fill="#3d3d3d"/></svg>
<svg class="a" style="left:1084px;top:371px" width="11" height="11" viewBox="0 0 11 11"><g fill="none" stroke="#3d3d3d" stroke-width="1.1"><rect x="4.8" y="0.7" width="4.9" height="4.9"/><path d="M2.9 3.7H1.6V8.3H6.3V7.1"/></g></svg>
<div class="t " style="left:814px;top:369px;font-size:13px;color:#333;font-weight:normal;letter-spacing:-0.05px;">Admin</div>
<div class="a" style="left:379px;top:427px;width:726px;height:91px;border:2px solid #f3c22c;background:#fff;"></div>
<div class="a" style="left:386px;top:435px;width:1px;height:14px;background:#000;"></div>
</body></html>
